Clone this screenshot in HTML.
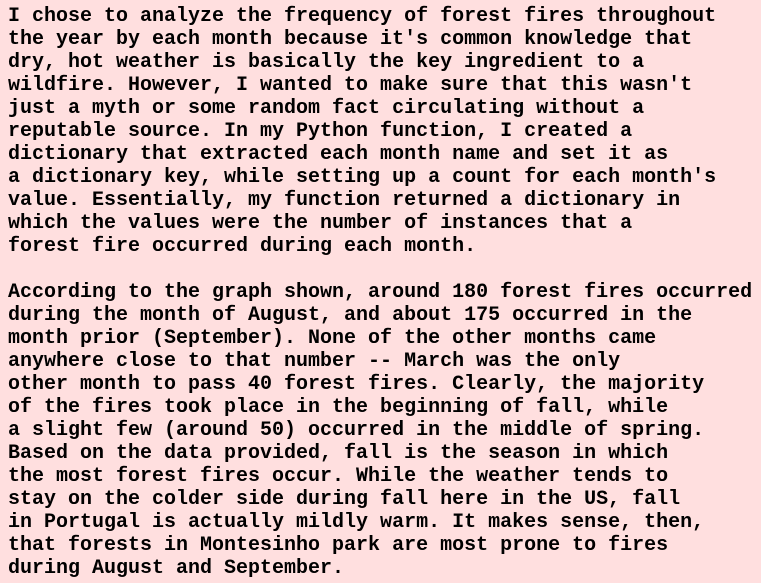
<!DOCTYPE html>
<html><head><meta charset="utf-8"><style>
html,body{margin:0;padding:0;background:#ffdfdf;width:761px;height:583px;overflow:hidden}
pre{margin:0;position:absolute;left:8px;top:5px;font-family:"Courier New","Nimbus Mono PS","Nimbus Mono L","FreeMono","Liberation Mono",monospace;font-weight:bold;font-size:20px;line-height:23px;color:#000}
</style></head><body><pre>I chose to analyze the frequency of forest fires throughout
the year by each month because it's common knowledge that
dry, hot weather is basically the key ingredient to a
wildfire. However, I wanted to make sure that this wasn't
just a myth or some random fact circulating without a
reputable source. In my Python function, I created a
dictionary that extracted each month name and set it as
a dictionary key, while setting up a count for each month's
value. Essentially, my function returned a dictionary in
which the values were the number of instances that a
forest fire occurred during each month.

According to the graph shown, around 180 forest fires occurred
during the month of August, and about 175 occurred in the
month prior (September). None of the other months came
anywhere close to that number -- March was the only
other month to pass 40 forest fires. Clearly, the majority
of the fires took place in the beginning of fall, while
a slight few (around 50) occurred in the middle of spring.
Based on the data provided, fall is the season in which
the most forest fires occur. While the weather tends to
stay on the colder side during fall here in the US, fall
in Portugal is actually mildly warm. It makes sense, then,
that forests in Montesinho park are most prone to fires
during August and September.</pre></body></html>
